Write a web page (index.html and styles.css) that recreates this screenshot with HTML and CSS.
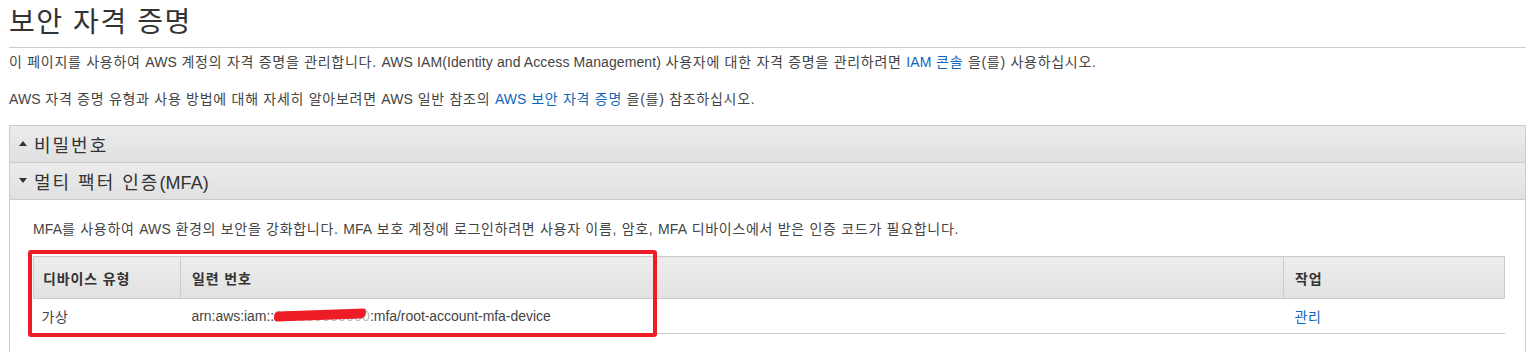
FILE: index.html
```html
<!DOCTYPE html>
<html lang="ko">
<head>
<meta charset="utf-8">
<title>보안 자격 증명</title>
<link rel="stylesheet" href="styles.css">
</head>
<body>
<div class="page">
  <h1 class="title">보안 자격 증명</h1>
  <p class="intro">이 페이지를 사용하여 <span class="lat">AWS</span> 계정의 자격 증명을 관리합니다. <span class="lat">AWS IAM(Identity and Access Management)</span> 사용자에 대한 자격 증명을 관리하려면 <a href="#" class="link"><span class="lat">IAM</span> 콘솔</a> 을(를) 사용하십시오.</p>
  <p class="intro second"><span class="lat">AWS</span> 자격 증명 유형과 사용 방법에 대해 자세히 알아보려면 <span class="lat">AWS</span> 일반 참조의 <a href="#" class="link"><span class="lat">AWS</span> 보안 자격 증명</a> 을(를) 참조하십시오.</p>

  <div class="panel">
    <div class="panel-head"><span class="caret caret-up"></span><span>비밀번호</span></div>
    <div class="panel-head"><span class="caret caret-down"></span><span>멀티 팩터 인증<span class="lat">(MFA)</span></span></div>
    <div class="panel-body">
      <p class="desc"><span class="lat">MFA</span>를 사용하여 <span class="lat">AWS</span> 환경의 보안을 강화합니다. <span class="lat">MFA</span> 보호 계정에 로그인하려면 사용자 이름, 암호, <span class="lat">MFA</span> 디바이스에서 받은 인증 코드가 필요합니다.</p>
      <div class="table-wrap">
        <table class="grid">
          <thead>
            <tr>
              <th class="c-type">디바이스 유형</th>
              <th class="c-serial">일련 번호</th>
              <th class="c-action">작업</th>
            </tr>
          </thead>
          <tbody>
            <tr>
              <td>가상</td>
              <td><span class="arn">arn:aws:iam::<span class="redacted">000000000000<span class="scribble"></span></span>:mfa/root-account-mfa-device</span></td>
              <td><a href="#" class="link">관리</a></td>
            </tr>
          </tbody>
        </table>
        <div class="highlight"></div>
      </div>
    </div>
  </div>
</div>
</body>
</html>
```

FILE: styles.css
```css
html, body {
  margin: 0;
  padding: 0;
  background: #ffffff;
}

body {
  font-family: "Liberation Sans", "Noto Sans CJK KR", Arial, sans-serif;
  color: #444444;
  font-size: 14px;
}

.lat {
  letter-spacing: 0.1px;
}

.page {
  padding: 0 4px 0 9px;
}

.title {
  margin: 0;
  padding: 5px 0 7px 0;
  font-size: 28px;
  line-height: 35px;
  font-weight: normal;
  color: #333333;
  letter-spacing: 1.6px;
  border-bottom: 1px solid #cccccc;
}

.intro {
  margin: 4px 0 0 0;
  line-height: 20px;
  letter-spacing: 0.72px;
}

.intro.second {
  margin-top: 17px;
}

.link {
  color: #1166bb;
  text-decoration: none;
}

.panel {
  margin-top: 16px;
  border: 1px solid #cccccc;
  border-bottom: none;
  height: 240px;
}

.panel-head {
  display: flex;
  align-items: center;
  padding-left: 9px;
  padding-bottom: 1px;
  box-sizing: border-box;
  height: 37px;
  font-size: 18px;
  color: #333333;
  letter-spacing: 2px;
  background: linear-gradient(#ececec, #e0e0e0);
  border-bottom: 1px solid #cccccc;
}

.panel-head .lat {
  letter-spacing: 0.1px;
}

.caret {
  width: 0;
  height: 0;
  margin-right: 7px;
  border-left: 4px solid transparent;
  border-right: 4px solid transparent;
}

.caret-up {
  border-bottom: 5px solid #333333;
}

.caret-down {
  border-top: 5px solid #333333;
}

.panel-body {
  padding: 19px 20px 0 23px;
}

.desc {
  margin: 0;
  line-height: 20px;
  letter-spacing: 0.7px;
}

.table-wrap {
  position: relative;
  margin-top: 17px;
}

.grid {
  width: 100%;
  border-collapse: collapse;
}

.grid th {
  height: 41px;
  padding: 0 9px 0 9px;
  text-align: left;
  font-weight: bold;
  color: #333333;
  letter-spacing: 0.85px;
  background: linear-gradient(#ededed, #e1e1e1);
  border: 1px solid #cccccc;
}

.grid th.c-type {
  width: 128px;
}

.grid th.c-serial {
  padding-left: 11px;
}

.grid th.c-action {
  width: 200px;
  padding-left: 11px;
}

.grid td {
  height: 33px;
  padding: 0 9px 1px 11px;
  border-bottom: 1px solid #cccccc;
  letter-spacing: 0.6px;
}

.grid td:first-child {
  padding-left: 8px;
}

.arn {
  white-space: nowrap;
  letter-spacing: -0.05px;
}

.redacted {
  position: relative;
  color: #bbbbbb;
  letter-spacing: 0.2px;
}

.scribble {
  position: absolute;
  left: 0;
  right: 4px;
  top: 2px;
  height: 10px;
  background: #ee1c25;
  border-radius: 5px 2px 6px 3px;
  transform: rotate(-2deg);
}

.highlight {
  position: absolute;
  left: -5px;
  top: -6px;
  width: 621px;
  height: 79px;
  border: 4px solid #ee1c25;
  border-radius: 3px;
  pointer-events: none;
}
```
